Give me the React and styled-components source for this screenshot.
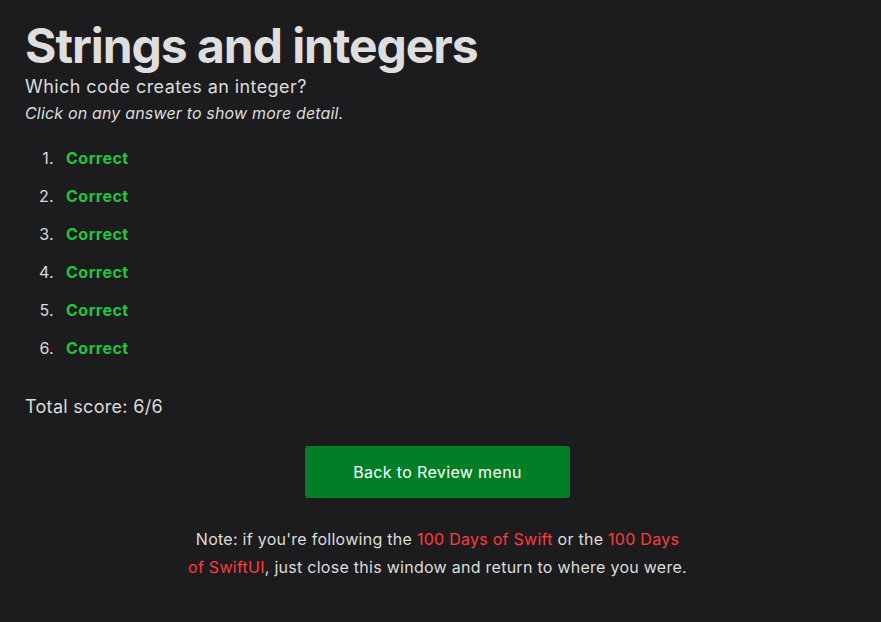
import React from "react";
import styled, { createGlobalStyle } from "styled-components";

const GlobalStyle = createGlobalStyle`
  html, body {
    margin: 0;
    background: #1c1c1e;
  }
  body {
    font-family: Inter, "Noto Sans", sans-serif;
    color: #dcdcdc;
  }
`;

const Page = styled.div`
  padding: 18px 31px 30px 25px;
`;

const Title = styled.h1`
  margin: 0;
  font-size: 48px;
  font-weight: 700;
  line-height: 56px;
  letter-spacing: -1.05px;
  color: #dedede;
`;

const Question = styled.p`
  margin: 0;
  font-size: 18px;
  line-height: 26px;
  letter-spacing: 0.42px;
`;

const Hint = styled.p`
  margin: 0;
  font-size: 16px;
  line-height: 27px;
  font-style: italic;
  letter-spacing: 0.17px;
`;

const Answers = styled.ol`
  margin: 19px 0 0;
  padding: 0;
  list-style: none;
  font-size: 16px;
  display: flex;
  flex-direction: column;
  gap: 14px;
`;

const Answer = styled.li`
  display: flex;
  gap: 12px;
  line-height: 24px;
`;

const Marker = styled.span`
  width: 29px;
  text-align: right;
  letter-spacing: 0.3px;
`;

const Verdict = styled.span`
  color: ${(p) => (p.correct ? "#1ec83d" : "#ff3b30")};
  font-weight: 700;
  letter-spacing: 0.5px;
`;

const Score = styled.p`
  margin: 34px 0 0;
  font-size: 18px;
  line-height: 26px;
  letter-spacing: 0.3px;
`;

const Center = styled.div`
  display: flex;
  flex-direction: column;
  align-items: center;
`;

const BackButton = styled.button`
  margin-top: 26px;
  width: 265px;
  height: 52px;
  border: none;
  border-radius: 3px;
  background: #007f26;
  color: #fff;
  font-family: inherit;
  font-size: 16px;
  letter-spacing: 0.35px;
  cursor: pointer;
`;

const Note = styled.p`
  margin: 27px 0 0;
  max-width: 502px;
  text-align: center;
  font-size: 16px;
  line-height: 28px;
  letter-spacing: 0.27px;
`;

const RedLink = styled.a`
  color: #ff3b3b;
  text-decoration: none;
`;

export default function App() {
  const results = [true, true, true, true, true, true];
  return (
    <>
      <GlobalStyle />
      <Page>
        <Title>Strings and integers</Title>
        <Question>Which code creates an integer?</Question>
        <Hint>Click on any answer to show more detail.</Hint>
        <Answers>
          {results.map((r, i) => (
            <Answer key={i}>
              <Marker>{i + 1}.</Marker>
              <Verdict correct={r}>{r ? "Correct" : "Wrong"}</Verdict>
            </Answer>
          ))}
        </Answers>
        <Score>Total score: 6/6</Score>
        <Center>
          <BackButton>Back to Review menu</BackButton>
          <Note>
            Note: if you're following the <RedLink href="#">100 Days of Swift</RedLink> or the{" "}
            <RedLink href="#">100 Days of SwiftUI</RedLink>, just close this window and return to where you were.
          </Note>
        </Center>
      </Page>
    </>
  );
}
